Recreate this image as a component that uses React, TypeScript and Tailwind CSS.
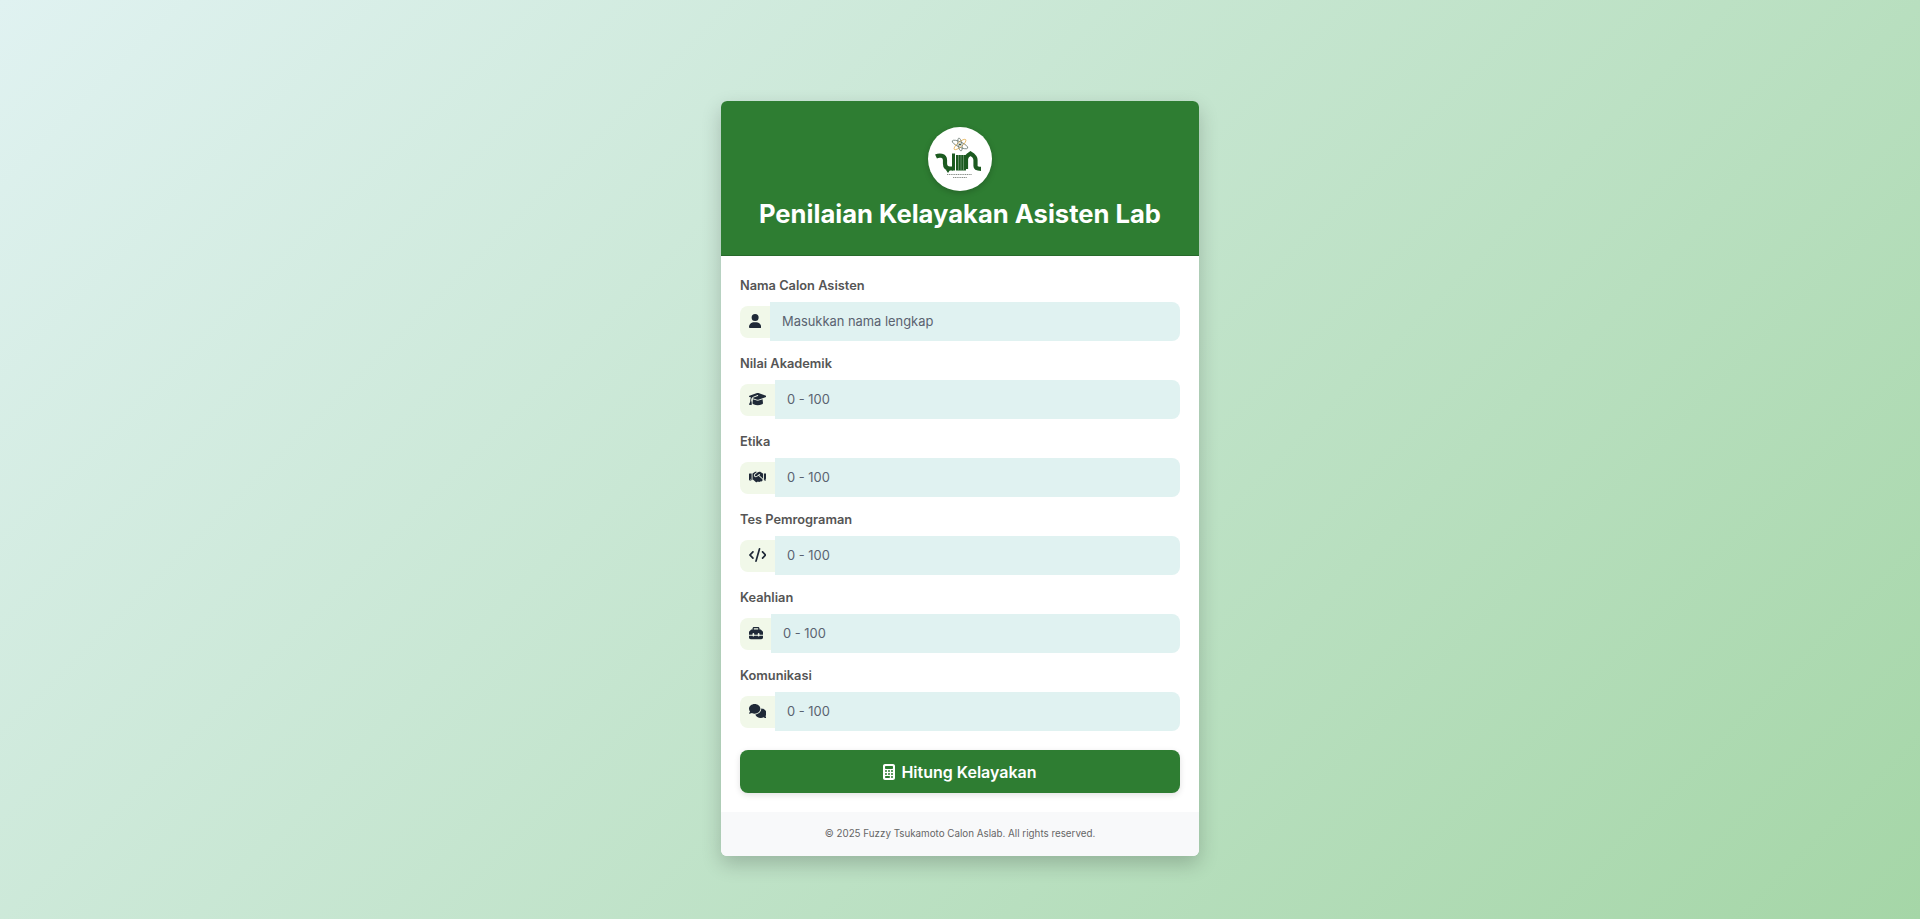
import type { ComponentType } from "react";
import {
  FaCalculator,
  FaCode,
  FaComments,
  FaGraduationCap,
  FaHandshake,
  FaToolbox,
  FaUser,
} from "react-icons/fa6";

type Field = {
  label: string;
  placeholder: string;
  Icon: ComponentType<{ className?: string }>;
  iconWidth: string;
  boxWidth: string;
};

const FIELDS: Field[] = [
  { label: "Nama Calon Asisten", placeholder: "Masukkan nama lengkap", Icon: FaUser, iconWidth: "w-[12.25px]", boxWidth: "w-[30px]" },
  { label: "Nilai Akademik", placeholder: "0 - 100", Icon: FaGraduationCap, iconWidth: "w-[17.5px]", boxWidth: "w-[35px]" },
  { label: "Etika", placeholder: "0 - 100", Icon: FaHandshake, iconWidth: "w-[17.5px]", boxWidth: "w-[35px]" },
  { label: "Tes Pemrograman", placeholder: "0 - 100", Icon: FaCode, iconWidth: "w-[17.5px]", boxWidth: "w-[35px]" },
  { label: "Keahlian", placeholder: "0 - 100", Icon: FaToolbox, iconWidth: "w-[14px]", boxWidth: "w-[31px]" },
  { label: "Komunikasi", placeholder: "0 - 100", Icon: FaComments, iconWidth: "w-[17.5px]", boxWidth: "w-[35px]" },
];

function Logo() {
  return (
    <div className="flex h-16 w-16 items-center justify-center rounded-full bg-white shadow-[0_2px_6px_rgba(0,0,0,0.2)]">
      <svg viewBox="0 0 64 64" className="h-16 w-16">
        {/* atom */}
        <g fill="none" strokeWidth="0.7">
          <ellipse cx="32" cy="17.500" rx="8.500" ry="2.600" stroke="#5f6f66" transform="rotate(25 32 17.500)" />
          <ellipse cx="32" cy="17.500" rx="7.500" ry="2.400" stroke="#e0a63c" transform="rotate(-40 32 17.500)" />
          <ellipse cx="32" cy="17.500" rx="6.500" ry="2" stroke="#5f6f66" transform="rotate(80 32 17.500)" />
        </g>
        <circle cx="32" cy="17.500" r="1.100" fill="#3f5a45" />
        {/* UIN letterforms */}
        <g fill="none" stroke="#1c5a20" strokeWidth="4.200">
          <path d="M8 29.500c3-1.500 9-1.500 9 3.500v3.500c0 3.500 2 5 5 5h3" />
          <path d="M38 42V32c0-2 2-4 4.500-5.500 2.500 1.500 5 3.500 5 6.500v6c0 2 2 2.800 5.500 2.800" />
        </g>
        <path d="M24 26.500h3v17h-3zM28 28h10v15.500h-10z" fill="#1c5a20" />
        <path d="M30.500 28v15M33 28v15M35.500 28v15" stroke="#8fb091" strokeWidth="0.6" />
        <path d="M18 43l2 3 2-3z" fill="#1c5a20" />
        {/* tagline */}
        <path d="M19 47.500h25M25 50.500h14" stroke="#8a8f8a" strokeWidth="1" strokeDasharray="1.200 0.600" />
      </svg>
    </div>
  );
}

export default function App() {
  return (
    <div className="min-h-screen bg-[linear-gradient(135deg,#e0f2f1,#a5d6a7)] pt-[101px] font-['Inter',sans-serif]">
      <div className="mx-auto w-[478px] overflow-hidden rounded-md bg-white shadow-[0_8px_20px_rgba(0,0,0,0.2)]">
        <header className="flex h-[155px] flex-col items-center border-b border-[#27692b] bg-[#2e7d32] pt-[26px]">
          <Logo />
          <h1 className="mt-[7px] text-[25.6px] leading-8 font-bold text-white">
            Penilaian Kelayakan Asisten Lab
          </h1>
        </header>

        <form className="px-[19px] pt-5 pb-[19px]">
          {FIELDS.map(({ label, placeholder, Icon, iconWidth, boxWidth }) => (
            <div key={label} className="mb-[13px]">
              <label className="mb-1.5 block text-[12.8px] leading-5 font-semibold text-[#555555]">
                {label}
              </label>
              <div className="flex items-center">
                <span className={`flex h-8 items-center justify-center rounded-l-lg bg-[#f1f8e9] text-[#1f2937] ${boxWidth}`}>
                  <Icon className={`h-[14px] -translate-y-px ${iconWidth}`} />
                </span>
                <input
                  type="text"
                  placeholder={placeholder}
                  className="h-[39px] min-w-0 flex-1 rounded-r-lg bg-[#e0f2f1] px-3 text-[12.9px] text-[#374151] outline-none placeholder:text-[#5a6270]"
                />
              </div>
            </div>
          ))}
          <button
            type="button"
            className="mt-[19px] flex h-[43px] w-full items-center justify-center gap-[6px] rounded-lg bg-[#2e7d32] text-[16px] font-semibold text-white shadow-[0_2px_6px_rgba(0,0,0,0.12)]"
          >
            <FaCalculator className="h-4 w-3" />
            Hitung Kelayakan
          </button>
        </form>

        <footer className="flex h-11 items-center justify-center bg-[#f8f9fa] text-[9.8px] text-[#666666]">
          © 2025 Fuzzy Tsukamoto Calon Aslab. All rights reserved.
        </footer>
      </div>
    </div>
  );
}
